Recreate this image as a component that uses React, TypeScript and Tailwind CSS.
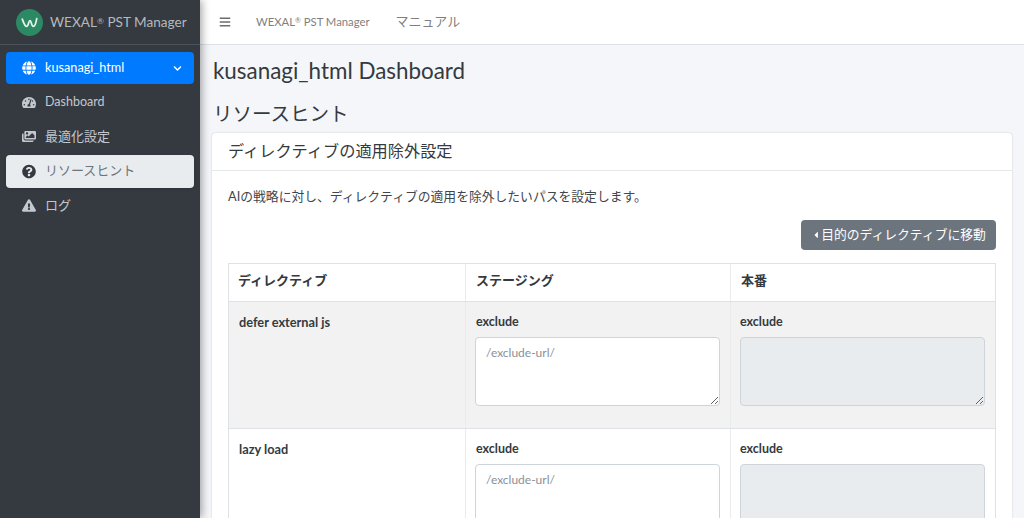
import React from "react";
import {
  FaBars,
  FaCaretLeft,
  FaChevronDown,
  FaExclamationTriangle,
  FaGlobe,
  FaImages,
  FaQuestionCircle,
  FaTachometerAlt,
} from "react-icons/fa";

const font = "font-['Lato','Noto_Sans_CJK_JP',sans-serif]";

const Row = ({ name, gray }: { name: string; gray?: boolean }) => (
  <div className={`grid grid-cols-[236px_265px_1fr] border-b border-[#dee2e6] ${gray ? "bg-[#f2f2f2]" : "bg-white"}`}>
    <div className="pl-[10px] pt-[11px] text-[12.75px] leading-[18px] font-bold text-[#343a40]">{name}</div>
    <div className="border-l border-[#e9ecef] pl-[10px] pr-[9px] pt-[11px] pb-[22px]">
      <div className="text-[12.5px] leading-[18px] font-bold text-[#343a40]">exclude</div>
      <textarea
        readOnly
        placeholder="/exclude-url/"
        className="mt-[6px] -ml-[1px] block h-[69px] w-[245px] rounded-[4px] border border-[#ced4da] bg-white px-[10px] py-[6px] text-[12px] placeholder:text-[#8a9097]"
      />
    </div>
    <div className="border-l border-[#e9ecef] pl-[9px] pr-[10px] pt-[11px] pb-[22px]">
      <div className="text-[12.5px] leading-[18px] font-bold text-[#343a40]">exclude</div>
      <textarea
        disabled
        className="mt-[6px] block h-[69px] w-[245px] rounded-[4px] border border-[#ced4da] bg-[#e9ecef]"
      />
    </div>
  </div>
);

const NavItem = ({ icon, label, active, latin }: { icon: React.ReactNode; label: string; active?: boolean; latin?: boolean }) => (
  <div
    className={`mx-[6px] flex h-[33px] items-center gap-[9px] rounded-[4px] pl-[16px] ${latin ? "text-[12.5px]" : "text-[13px]"} ${
      active ? "bg-[#e9ecef] text-[#343a40] shadow" : "text-[#c2c7d0]"
    }`}
  >
    <span className="flex w-[14px] justify-center text-[15px]">{icon}</span>
    <span className={active ? "text-[#6c757d]" : ""}>{label}</span>
  </div>
);

const Reg = () => <span className="relative -top-[3px] text-[0.62em]">®</span>;

export default function App() {
  return (
    <div className={`${font} flex h-[518px] w-[1024px] overflow-hidden bg-[#f4f6f9] text-[#343a40]`}>
      <aside className="z-10 h-full w-[200px] shrink-0 bg-[#343a40] shadow-[2px_0_8px_rgba(0,0,0,0.35)]">
        <div className="flex h-[45px] items-center gap-[7px] border-b border-[#4b545c] pl-[16px]">
          <svg viewBox="0 0 28 28" className="h-[27px] w-[27px] shrink-0">
            <circle cx="14" cy="14" r="14" fill="#2b8a63" />
            <path d="M6.5 10.5 C8 14 9 18 11 18 C13 18 13 12 14.5 12 C16 12 16 18 18 18 C20 18 21 13 21.5 10" fill="none" stroke="#e8f3ee" strokeWidth="1.8" strokeLinecap="round" strokeLinejoin="round" />
          </svg>
          <span className="text-[13.6px] whitespace-nowrap text-[#b5b9bd]">WEXAL<Reg /> PST Manager</span>
        </div>
        <div className="flex flex-col gap-[1.5px] pt-[7px]">
          <div className="mx-[6px] flex h-[32px] items-center rounded-[4px] bg-[#007bff] pl-[16px] pr-[12px] text-[12.7px] text-white">
            <FaGlobe className="w-[14px] text-[14px]" />
            <span className="ml-[9px] flex-1">kusanagi_html</span>
            <FaChevronDown className="text-[9px]" />
          </div>
          <NavItem icon={<FaTachometerAlt />} label="Dashboard" latin />
          <NavItem icon={<FaImages />} label="最適化設定" />
          <NavItem icon={<FaQuestionCircle className="text-[#343a40]" />} label="リソースヒント" active />
          <NavItem icon={<FaExclamationTriangle />} label="ログ" />
        </div>
      </aside>

      <div className="flex min-w-0 flex-1 flex-col">
        <header className="flex h-[45px] shrink-0 items-center border-b border-[#dee2e6] bg-white text-[11.3px] text-[#7f7f7f]">
          <FaBars className="ml-[19px] text-[12px] text-[#6c6c6c]" />
          <span className="ml-[25px]">WEXAL<Reg /> PST Manager</span>
          <span className="ml-[26px] text-[13px]">マニュアル</span>
        </header>

        <main className="flex-1 px-[12px]">
          <h1 className="mt-[11px] ml-[1px] text-[22.4px] leading-[30px] text-[#343a40]">kusanagi_html Dashboard</h1>
          <h2 className="mt-[13px] ml-[1px] text-[19.5px] leading-[30px] text-[#343a40]">リソースヒント</h2>
          <section className="mt-[4px] rounded-[4px] bg-white shadow-[0_0_2px_rgba(0,0,0,0.2)]">
            <div className="flex h-[38px] items-center border-b border-[#e5e7e9] pb-[1px] pl-[16px] text-[16.2px]">ディレクティブの適用除外設定</div>
            <div className="px-[16px] pt-[15px]">
              <p className="text-[12.8px] leading-[20px] text-[#3f464c]">AIの戦略に対し、ディレクティブの適用を除外したいパスを設定します。</p>
              <div className="mt-[14px] flex justify-end">
                <button className="flex h-[30px] w-[195px] items-center justify-center rounded-[4px] bg-[#6c757d] text-[12.8px] text-white">
                  <FaCaretLeft className="text-[10px]" />
                  目的のディレクティブに移動
                </button>
              </div>
              <div className="mt-[13px] border border-[#dee2e6]">
                <div className="grid h-[38px] grid-cols-[236px_265px_1fr] items-center border-b border-[#dee2e6] text-[13px] font-bold">
                  <div className="pb-[3px] pl-[9px]">ディレクティブ</div>
                  <div className="flex h-full items-center border-l border-[#e9ecef] pb-[3px] pl-[10px]">ステージング</div>
                  <div className="flex h-full items-center border-l border-[#e9ecef] pb-[3px] pl-[10px]">本番</div>
                </div>
                <Row name="defer external js" gray />
                <Row name="lazy load" />
              </div>
            </div>
          </section>
        </main>
      </div>
    </div>
  );
}
